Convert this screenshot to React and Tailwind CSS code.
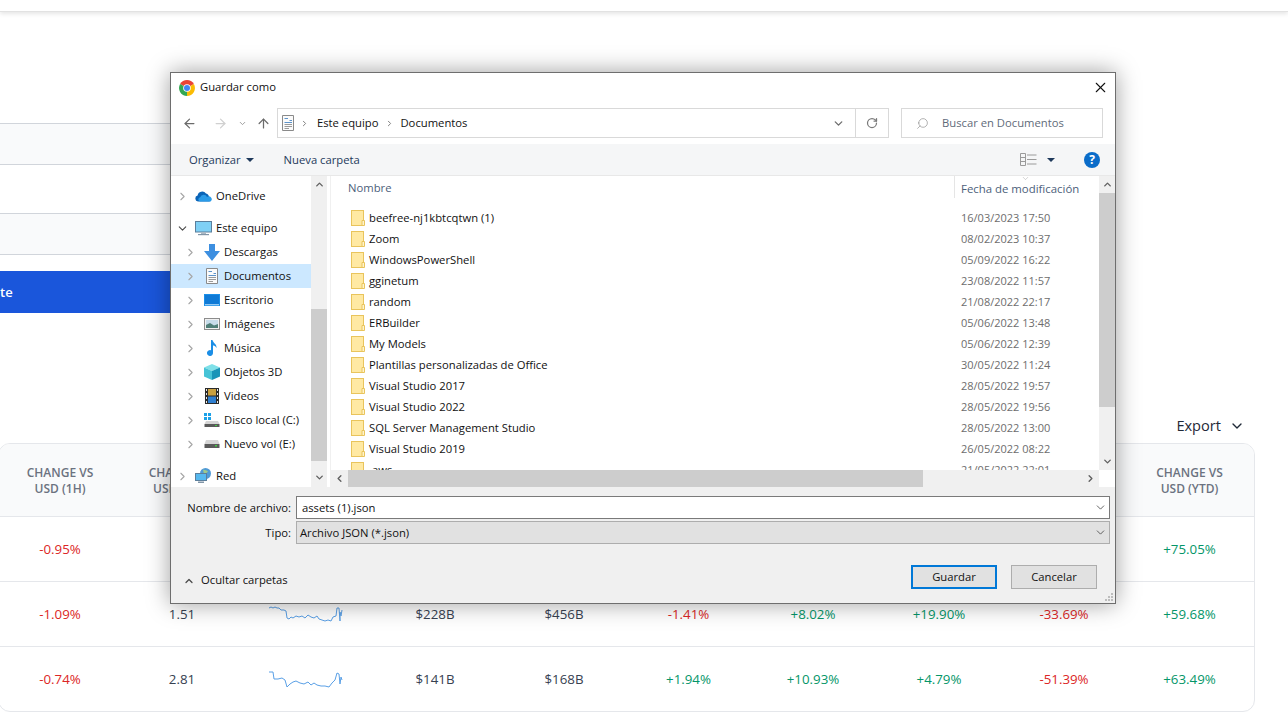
import { ArrowLeft, ArrowRight, ArrowUp, ChevronDown, ChevronRight, ChevronUp, ChevronLeft, RotateCw, Search, X } from "lucide-react";

const FONT = "font-['Open_Sans','Noto_Sans',sans-serif]";

const files = [
  ["beefree-nj1kbtcqtwn (1)", "16/03/2023 17:50"],
  ["Zoom", "08/02/2023 10:37"],
  ["WindowsPowerShell", "05/09/2022 16:22"],
  ["gginetum", "23/08/2022 11:57"],
  ["random", "21/08/2022 22:17"],
  ["ERBuilder", "05/06/2022 13:48"],
  ["My Models", "05/06/2022 12:39"],
  ["Plantillas personalizadas de Office", "30/05/2022 11:24"],
  ["Visual Studio 2017", "28/05/2022 19:57"],
  ["Visual Studio 2022", "28/05/2022 19:56"],
  ["SQL Server Management Studio", "28/05/2022 13:00"],
  ["Visual Studio 2019", "26/05/2022 08:22"],
  [".aws", "21/05/2022 22:01"],
];

const rows = [
  { c1: "-0.95%", last: "+75.05%" },
  {
    c1: "-1.09%", c2: "1.51", c4: "$228B", c5: "$456B", c6: "-1.41%", c7: "+8.02%", c8: "+19.90%", c9: "-33.69%", last: "+59.68%",
    spark: "0,2 2,1 4,2 6,1 8,2 10,2 12,4 15,4 17,5 18,12 20,13 22,11 24,12 27,10 30,11 33,10 36,12 39,9 42,11 45,12 48,10 50,13 53,14 56,15 59,14 62,15 64,11 67,10 68,2 70,2 71,15 71,6 72,10 73,4",
  },
  {
    c1: "-0.74%", c2: "2.81", c4: "$141B", c5: "$168B", c6: "+1.94%", c7: "+10.93%", c8: "+4.79%", c9: "-51.39%", last: "+63.49%",
    spark: "0,1 4,1 5,8 9,8 13,7 16,9 18,16 21,13 24,11 27,10 31,12 35,13 39,11 42,14 45,12 48,14 52,15 56,15 60,16 63,12 66,9 68,2 70,3 71,13 72,6 73,9",
  },
];

const COLS = "grid-cols-[122px_122px_126px_132px_126px_123px_126px_126px_124px_127px]";

function pct(v) {
  if (!v) return "text-[#374151]";
  if (v[0] === "-") return "text-[#dc2626]";
  if (v[0] === "+") return "text-[#059669]";
  return "text-[#374151]";
}

function Cell({ v }) {
  return <div className={`pt-[1px] text-center text-[13.3px] ${pct(v)}`}>{v}</div>;
}

function Row({ r }) {
  return (
    <div className={`grid ${COLS} h-[65px] items-center border-t border-[#e5e7eb]`}>
      <Cell v={r.c1} />
      <Cell v={r.c2} />
      <div className="flex justify-center">
        {r.spark && (
          <svg width="74" height="17" className="ml-[-1px]">
            <polyline points={r.spark} fill="none" stroke="#5aa0e6" strokeWidth="1" />
          </svg>
        )}
      </div>
      <Cell v={r.c4} />
      <Cell v={r.c5} />
      <Cell v={r.c6} />
      <Cell v={r.c7} />
      <Cell v={r.c8} />
      <Cell v={r.c9} />
      <Cell v={r.last} />
    </div>
  );
}

function Folder() {
  return (
    <svg width="14" height="16" viewBox="0 0 14 16" className="shrink-0">
      <rect x="0.5" y="0.5" width="12" height="15" fill="#ffe9a3" stroke="#e9c45c" />
      <path d="M11 15.5V10.5H13.5V15.5Z" fill="#fff4cc" stroke="#e9c45c" />
    </svg>
  );
}

function ChromeLogo() {
  return (
    <svg width="16" height="16" viewBox="0 0 16 16">
      <path d="M8 8L1.1 4A8 8 0 0 1 14.9 4Z" fill="#ea4335" />
      <path d="M8 8L14.9 4A8 8 0 0 1 8 16Z" fill="#fbbc04" />
      <path d="M8 8L8 16A8 8 0 0 1 1.1 4Z" fill="#34a853" />
      <circle cx="8" cy="8" r="3.8" fill="#fff" />
      <circle cx="8" cy="8" r="3" fill="#4285f4" />
    </svg>
  );
}

function DocIcon({ size = 14 }) {
  return (
    <svg width={size} height={size + 2} viewBox="0 0 14 16">
      <path d="M1.5 .5H12.5V15.5H1.5Z" fill="#fbfbfb" stroke="#8a8a8a" />
      <path d="M3.5 3.5H7M8.5 5.5H11M3.5 7.5H11" stroke="#5d93c9" />
      <path d="M3.5 9.5H11M3.5 11.5H11M3.5 13.5H8" stroke="#9a9a9a" />
    </svg>
  );
}

const treeIcons = {
  onedrive: (
    <svg width="17" height="12" viewBox="0 0 17 12">
      <path d="M3 11.5a3 3 0 0 1-.4-5.9A4.6 4.6 0 0 1 11 3.6a3.6 3.6 0 0 1 3 4.4 2 2 0 0 1 .6 3.5Z" fill="#0a64b8" />
      <path d="M5 11.5a2.2 2.2 0 0 1 .2-4.3A3.6 3.6 0 0 1 12 7a2.3 2.3 0 0 1 3.6 4.5Z" fill="#2a9be8" />
    </svg>
  ),
  pc: (
    <svg width="17" height="15" viewBox="0 0 17 15">
      <rect x=".5" y=".5" width="16" height="10.5" fill="#7fd0f5" stroke="#5b7f9c" />
      <rect x="6" y="11" width="5" height="2" fill="#aab8c4" />
      <rect x="3" y="13" width="11" height="1.2" fill="#8296a8" />
    </svg>
  ),
  download: (
    <svg width="16" height="17" viewBox="0 0 16 17">
      <path d="M5 0H11V7H16L8 17 0 7H5Z" fill="#3d8fe0" />
    </svg>
  ),
  doc: <DocIcon />,
  desktop: (
    <svg width="16" height="12" viewBox="0 0 16 12">
      <rect width="16" height="12" fill="#1a8fe8" />
      <rect x="1" y="1" width="14" height="9" fill="#0f7ad6" />
      <rect x="1" y="10.4" width="14" height=".8" fill="#e6f3fd" />
    </svg>
  ),
  images: (
    <svg width="16" height="12" viewBox="0 0 16 12">
      <rect x=".5" y=".5" width="15" height="11" fill="#f1f1f1" stroke="#8c8c8c" />
      <rect x="2" y="2" width="12" height="8" fill="#c7dcea" />
      <path d="M2 10V7L6 5 10 7.5 14 6V10Z" fill="#4f7f78" />
    </svg>
  ),
  music: (
    <svg width="12" height="16" viewBox="0 0 12 16">
      <path d="M5 0H6.5C7 3 11 4 10.5 8 9.5 6 8 5.5 7 5.5V13a3 3 0 1 1-2-2.8Z" fill="#1b8ee6" />
    </svg>
  ),
  cube: (
    <svg width="16" height="16" viewBox="0 0 16 16">
      <path d="M8 0 16 3.5 8 7 0 3.5Z" fill="#7fe0e8" />
      <path d="M0 3.5 8 7V16L0 12.5Z" fill="#46c3d6" />
      <path d="M16 3.5 8 7V16L16 12.5Z" fill="#1a95b8" />
    </svg>
  ),
  video: (
    <svg width="14" height="16" viewBox="0 0 14 16">
      <rect width="14" height="16" fill="#2b2b2b" />
      <rect x="3" y="1" width="8" height="6.5" fill="#c9a040" />
      <rect x="3" y="8.5" width="8" height="6.5" fill="#2f7fd0" />
      <path d="M1 1h1v2H1ZM1 5h1v2H1ZM1 9h1v2H1ZM1 13h1v2H1ZM12 1h1v2h-1ZM12 5h1v2h-1ZM12 9h1v2h-1ZM12 13h1v2h-1Z" fill="#e8e8e8" />
    </svg>
  ),
  disk: (
    <svg width="16" height="14" viewBox="0 0 16 14">
      <path d="M0 0H3V3H0ZM4 0H7V3H4ZM0 4H3V7H0ZM4 4H7V7H4Z" fill="#1ba1e8" />
      <path d="M2 8H14L15.5 11H.5Z" fill="#d5d5d5" />
      <rect x=".5" y="11" width="15" height="3" fill="#5a5a5a" />
      <rect x="11" y="12" width="2" height="1" fill="#40d040" />
    </svg>
  ),
  drive: (
    <svg width="16" height="8" viewBox="0 0 16 8">
      <path d="M2 0H14L15.5 4H.5Z" fill="#d5d5d5" />
      <rect x=".5" y="4" width="15" height="4" fill="#5a5a5a" />
      <rect x="11" y="5" width="2" height="1.5" fill="#40d040" />
    </svg>
  ),
  net: (
    <svg width="17" height="16" viewBox="0 0 17 16">
      <circle cx="10.5" cy="5.5" r="5.5" fill="#4f9ad6" />
      <path d="M8 1.5c2 1 4 .5 5 2-1 2-3 1-4 3Z" fill="#9fc98a" />
      <rect x=".5" y="5.5" width="11" height="7" fill="#55b8ee" stroke="#5b7f9c" />
      <rect x="3" y="13.5" width="6" height="1.5" fill="#8296a8" />
    </svg>
  ),
};

const tree = [
  { label: "OneDrive", icon: "onedrive", mb: "mb-[8px]", level: 0, chevron: "right" },
  { label: "Este equipo", icon: "pc", level: 0, chevron: "down" },
  { label: "Descargas", icon: "download", level: 1 },
  { label: "Documentos", icon: "doc", level: 1, selected: true },
  { label: "Escritorio", icon: "desktop", level: 1 },
  { label: "Imágenes", icon: "images", level: 1 },
  { label: "Música", icon: "music", level: 1 },
  { label: "Objetos 3D", icon: "cube", level: 1 },
  { label: "Videos", icon: "video", level: 1 },
  { label: "Disco local (C:)", icon: "disk", level: 1 },
  { label: "Nuevo vol (E:)", icon: "drive", level: 1 },
  { label: "Red", icon: "net", level: 0, mt: "mt-[8px]" },
];

function TreeRow({ item }) {
  const pad = item.level ? "pl-[13px]" : "pl-[5px]";
  return (
    <div className={`flex h-[24px] items-center ${pad} ${item.selected ? "bg-[#cce8ff]" : ""} ${item.mb || ""} ${item.mt || ""}`}>
      {item.chevron === "down" ? (
        <ChevronDown size={13} strokeWidth={2} className="text-[#4a4a4a]" />
      ) : (
        <ChevronRight size={13} strokeWidth={2} className="text-[#a6a6a6]" />
      )}
      <div className="ml-[4px] flex w-[21px] justify-center">{treeIcons[item.icon]}</div>
      <span className="ml-[2px] whitespace-nowrap text-[#111]">{item.label}</span>
    </div>
  );
}

function SaveDialog() {
  return (
    <div className={`absolute left-[170px] top-[72px] flex h-[532px] w-[946px] flex-col border border-[#6e6e6e] bg-white text-[11.25px] shadow-[0_0_22px_rgba(0,0,0,0.38)] ${FONT}`}>
      {/* title */}
      <div className="flex h-[29px] shrink-0 items-center pl-[8px] pr-[6px]">
        <ChromeLogo />
        <span className="ml-[5px] text-[#111]">Guardar como</span>
        <X size={17} strokeWidth={1.5} className="ml-auto text-[#111]" />
      </div>

      {/* nav */}
      <div className="flex h-[42px] shrink-0 items-start pt-[6px]">
        <div className="ml-[11px] flex h-[30px] w-[95px] items-center">
          <ArrowLeft size={15} strokeWidth={2} className="text-[#6b6b6b]" />
          <ArrowRight size={15} strokeWidth={2} className="ml-[16px] text-[#d0d0d0]" />
          <ChevronDown size={9} strokeWidth={2.5} className="ml-[10px] text-[#9a9a9a]" />
          <ArrowUp size={15} strokeWidth={2} className="ml-[9px] text-[#6b6b6b]" />
        </div>
        <div className="flex h-[30px] w-[612px] items-center border border-[#d9d9d9] pl-[3px]">
          <DocIcon />
          <ChevronRight size={9} strokeWidth={2.5} className="ml-[5px] text-[#7a7a7a]" />
          <span className="ml-[8px] text-[#111]">Este equipo</span>
          <ChevronRight size={9} strokeWidth={2.5} className="ml-[7px] text-[#7a7a7a]" />
          <span className="ml-[6px] text-[#111]">Documentos</span>
          <div className="ml-auto flex w-[33px] justify-center">
            <ChevronDown size={13} strokeWidth={2.5} className="text-[#6e6e6e]" />
          </div>
          <div className="flex h-full w-[33px] items-center justify-center border-l border-[#d9d9d9]">
            <RotateCw size={12} strokeWidth={2.5} className="text-[#7a7a7a]" />
          </div>
        </div>
        <div className="ml-[12px] flex h-[30px] w-[202px] items-center border border-[#d9d9d9] pl-[14px] text-[#5f6b7a]">
          <Search size={13} strokeWidth={1.2} className="-scale-x-100 text-[#8a8a8a]" />
          <span className="ml-[13px]">Buscar en Documentos</span>
        </div>
      </div>

      {/* toolbar */}
      <div className="flex h-[32px] shrink-0 items-center border-b border-[#e8e8e8] bg-[#f5f6f7] pl-[18px] text-[#1e395b]">
        <span className="pt-[1px]">Organizar</span>
        <svg width="8" height="4" className="ml-[5px]"><path d="M0 0H8L4 4Z" fill="#1e395b" /></svg>
        <span className="ml-[30px] pt-[1px]">Nueva carpeta</span>
        <svg width="17" height="13" viewBox="0 0 17 13" className="ml-auto">
          <path d="M.5 .5H5.5V12.5H.5ZM.5 4.5H5.5M.5 8.5H5.5M7 2H16.5M7 6.5H16.5M7 11H16.5" fill="none" stroke="#9a9a9a" />
        </svg>
        <svg width="8" height="4" className="ml-[10px]"><path d="M0 0H8L4 4Z" fill="#1e395b" /></svg>
        <div className="ml-[29px] mr-[15px] flex h-[16px] w-[16px] items-center justify-center rounded-full bg-[#0a6cc9] text-[12px] font-bold text-white">?</div>
      </div>

      {/* panes */}
      <div className="flex h-[311px] shrink-0">
        <div className="flex w-[156px] shrink-0 bg-white">
          <div className="w-[140px] shrink-0 overflow-hidden pt-[8px]">
            {tree.map((item) => (
              <TreeRow key={item.label} item={item} />
            ))}
          </div>
          <div className="flex w-[16px] flex-col bg-[#f0f0f0]">
            <div className="flex h-[17px] items-center justify-center">
              <ChevronUp size={11} strokeWidth={3} className="text-[#606060]" />
            </div>
            <div className="mt-[116px] h-[152px] bg-[#cdcdcd]" />
            <div className="flex flex-1 items-center justify-center pt-[6px]">
              <ChevronDown size={11} strokeWidth={3} className="text-[#606060]" />
            </div>
          </div>
        </div>

        <div className="ml-[3px] flex min-w-0 flex-1 flex-col border-l border-[#f0f0f0]">
          <div className="flex min-h-0 flex-1">
            <div className="min-w-0 flex-1 overflow-hidden">
              <div className="flex h-[22px] items-center">
                <span className="ml-[17px] w-[606px] pt-[3px] text-[#4c607a]">Nombre</span>
                <div className="relative flex h-full items-center border-l border-[#e5e5e5] pl-[6px] text-[#4c607a]">
                  <ChevronDown size={9} strokeWidth={1} className="absolute left-[66px] top-[-2px] text-[#8a8a8a]" />
                  <span className="whitespace-nowrap pt-[3px] text-[11.4px]">Fecha de modificación</span>
                </div>
              </div>
              <div className="pt-[9px]">
                {files.map(([name, date]) => (
                  <div key={name} className="flex h-[21px] items-center">
                    <div className="ml-[20px] flex w-[603px] items-center">
                      <Folder />
                      <span className="ml-[4px] whitespace-nowrap pt-[1px] text-[#111]">{name}</span>
                    </div>
                    <span className="ml-[7px] whitespace-nowrap pt-[1px] text-[11px] text-[#6d6d6d]">{date}</span>
                  </div>
                ))}
              </div>
            </div>
            <div className="flex w-[16px] shrink-0 flex-col bg-[#f0f0f0]">
              <div className="flex h-[17px] items-center justify-center">
                <ChevronUp size={11} strokeWidth={3} className="text-[#606060]" />
              </div>
              <div className="h-[214px] bg-[#cdcdcd]" />
              <div className="flex flex-1 items-end justify-center pb-[3px]">
                <ChevronDown size={11} strokeWidth={3} className="text-[#606060]" />
              </div>
            </div>
          </div>
          <div className="flex h-[17px] shrink-0">
            <div className="flex min-w-0 flex-1 items-center bg-[#f0f0f0]">
              <div className="flex w-[17px] justify-center">
                <ChevronLeft size={11} strokeWidth={3} className="text-[#606060]" />
              </div>
              <div className="h-full w-[575px] bg-[#cdcdcd]" />
              <div className="ml-auto flex w-[17px] justify-center">
                <ChevronRight size={11} strokeWidth={3} className="text-[#606060]" />
              </div>
            </div>
            <div className="w-[16px] shrink-0 bg-white" />
          </div>
        </div>
      </div>

      {/* bottom */}
      <div className="relative flex flex-1 flex-col bg-[#f0f0f0] pr-[5px] pt-[9px]">
        <div className="flex items-center">
          <span className="w-[120px] pt-[1px] text-right text-[#111]">Nombre de archivo:</span>
          <div className="ml-[5px] flex h-[23px] flex-1 items-center border border-[#7a7a7a] bg-white pl-[5px] text-[#111]">
            <span className="pt-[1px]">assets (1).json</span>
            <ChevronDown size={13} strokeWidth={1.5} className="ml-auto mr-[2px] text-[#444]" />
          </div>
        </div>
        <div className="mt-[2px] flex items-center">
          <span className="w-[120px] pt-[2px] text-right text-[#111]">Tipo:</span>
          <div className="ml-[5px] flex h-[23px] flex-1 items-center border border-[#adadad] bg-[#e1e1e1] pl-[3px] text-[#111]">
            <span className="pt-[2px]">Archivo JSON (*.json)</span>
            <ChevronDown size={13} strokeWidth={1.5} className="ml-auto mr-[2px] text-[#444]" />
          </div>
        </div>
        <div className="mt-[21px] flex items-center pl-[12px]">
          <div className="flex items-center pt-[7px]">
            <ChevronUp size={12} strokeWidth={2.5} className="text-[#4a4a4a]" />
            <span className="ml-[6px] text-[#111]">Ocultar carpetas</span>
          </div>
          <div className="ml-auto flex h-[24px] w-[86px] items-center justify-center border-2 border-[#0078d7] bg-[#e1e1e1] pt-[1px] text-[#111]">Guardar</div>
          <div className="ml-[14px] mr-[13px] flex h-[24px] w-[86px] items-center justify-center border border-[#adadad] bg-[#e1e1e1] pt-[1px] text-[#111]">Cancelar</div>
        </div>
        <svg width="10" height="10" className="absolute bottom-[1px] right-[1px]">
          <path d="M7 1h2v2H7ZM4 4h2v2H4ZM7 4h2v2H7ZM1 7h2v2H1ZM4 7h2v2H4ZM7 7h2v2H7Z" fill="#bdbdbd" />
        </svg>
      </div>
    </div>
  );
}

export default function App() {
  return (
    <div className="relative h-[722px] w-full overflow-hidden bg-white font-['Open_Sans',sans-serif]">
      <div className="h-[12px] border-b border-[#e2e2e2] shadow-[0_2px_4px_rgba(0,0,0,0.1)]" />

      {/* left form */}
      <div className="mt-[111px] w-[180px]">
        <div className="h-[42px] border-y border-[#d1d5db] bg-[#f9fafb]" />
        <div className="h-[48px]" />
        <div className="h-[42px] border-y border-[#d1d5db] bg-[#f9fafb]" />
        <div className="mt-[16px] flex h-[42px] items-center bg-[#1a56db] pt-[2px] text-[13px] font-semibold text-white">
          <span>te</span>
        </div>
      </div>

      {/* export */}
      <div className="mr-[43px] mt-[101px] flex h-[24px] items-center justify-end text-[14.6px] text-[#1f2937]">
        Export
        <ChevronDown size={16} strokeWidth={2} className="ml-[8px]" />
      </div>

      {/* table */}
      <div className="ml-[-2px] mt-[5px] w-[1257px] overflow-hidden rounded-xl border border-[#e5e7eb]">
        <div className={`grid ${COLS} h-[72px] items-center bg-[#f9fafb] pt-[2px] text-center text-[12px] font-semibold leading-[16px] text-[#6b7280]`}>
          <div>CHANGE VS<br />USD (1H)</div>
          <div>CHANGE VS<br />USD (24H)</div>
          <div />
          <div />
          <div />
          <div />
          <div />
          <div />
          <div />
          <div>CHANGE VS<br />USD (YTD)</div>
        </div>
        {rows.map((r) => (
          <Row key={r.c1} r={r} />
        ))}
      </div>

      <SaveDialog />
    </div>
  );
}
